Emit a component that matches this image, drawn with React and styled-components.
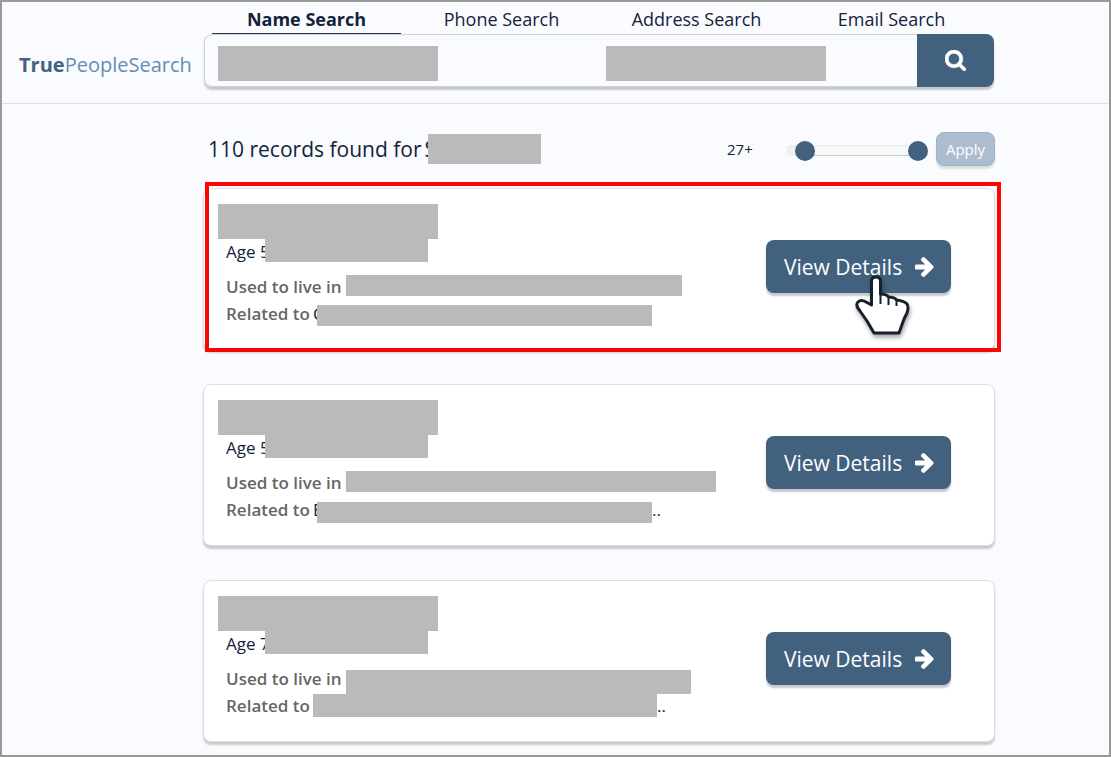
import React, { useState } from "react";
import styled, { createGlobalStyle, css } from "styled-components";

const navy = "#42617f";
const ink = "#13233a";

const GlobalStyle = createGlobalStyle`
  *, *::before, *::after { box-sizing: border-box; }
  body {
    margin: 0;
    background: #fafbff;
    color: ${ink};
    font-family: "Open Sans", "Noto Sans", sans-serif;
  }
  button, input { font: inherit; }
`;

const Page = styled.div`
  min-height: 100vh;
  border: 2px solid #999;
  padding-bottom: 11px;
`;

const columns = css`
  display: grid;
  grid-template-columns: 201px minmax(0, 792px);
`;

const Header = styled.header`
  ${columns}
  padding-bottom: 16px;
  border-bottom: 1px solid #dde0e5;
`;

const Logo = styled.a`
  align-self: end;
  padding: 0 0 8px 17px;
  color: #648db6;
  font-size: 20px;
  line-height: 28px;
  text-decoration: none;
  white-space: nowrap;

  strong { color: ${navy}; }
`;

const Tabs = styled.nav`
  display: grid;
  grid-template-columns: repeat(4, 1fr);
  padding: 0 6px;
`;

const Tab = styled.a`
  margin: 0 3px;
  height: 32px;
  border-bottom: 1px solid ${(p) => (p.$active ? "#2b3446" : "transparent")};
  color: ${ink};
  font-size: 18px;
  font-weight: ${(p) => (p.$active ? 700 : 400)};
  line-height: 34px;
  text-align: center;
  text-decoration: none;
  white-space: nowrap;
`;

const SearchBar = styled.form`
  display: grid;
  grid-template-columns: 388fr 325fr 77px;
  height: 53px;
  margin: 0 1px;
  border-radius: 8px;
  box-shadow: inset 0 0 0 1px #cdd3db, 0 3px 2px #c6c8cb;
`;

const Field = styled.label`
  position: relative;
  display: block;
`;

const FieldInput = styled.input`
  width: 100%;
  height: 100%;
  padding: 0 14px;
  border: 0;
  background: transparent;
`;

const FieldMask = styled.span`
  position: absolute;
  top: 12px;
  left: 14px;
  width: 220px;
  height: 35px;
  background: #bababa;
`;

const SearchButton = styled.button`
  display: grid;
  place-items: center;
  border: 0;
  border-radius: 0 8px 8px 0;
  background: ${navy};
  color: #fff;
`;

const Icon = styled.svg`
  flex: none;
  width: ${(p) => p.$width}px;
  height: ${(p) => p.$height}px;
  fill: currentColor;
`;

const Main = styled.main`
  ${columns}
`;

const Results = styled.section`
  grid-column: 2;
`;

const Toolbar = styled.div`
  display: flex;
  align-items: center;
  height: 84px;
  padding: 28px 0 22px;
`;

const Title = styled.h1`
  display: flex;
  align-items: center;
  flex: 1;
  margin: 0;
  padding-left: 5px;
  font-size: 21px;
  font-weight: 400;
  line-height: 30px;
  white-space: nowrap;
`;

const Lead = styled.span`
  display: flex;
  flex: none;
  gap: 3px;
  width: ${(p) => p.$width}px;
  white-space: nowrap;
`;

const Mask = styled.span`
  position: relative;
  flex: none;
  width: ${(p) => p.$width}px;
  height: ${(p) => p.$height}px;
  margin-top: ${(p) => p.$drop || 0}px;
  background: #bababa;
`;

const AgeValue = styled.output`
  width: 60px;
  font-size: 15px;
`;

const Slider = styled.div`
  position: relative;
  width: 141px;
  height: 20px;
  margin: 3px 8px 0 0;

  &::before {
    content: "";
    position: absolute;
    inset: 4px 8px 5px 0;
    border-radius: 4px;
    background: linear-gradient(to right, #f0f1f3 8px, #f7f8f8 24px);
    box-shadow: inset 1px 1px 1px #ebecef;
  }

  &::after {
    content: "";
    position: absolute;
    inset: 14px 16px 5px 20px;
    background: #cacccc;
  }
`;

const Range = styled.input`
  position: absolute;
  z-index: 1;
  inset: 0;
  width: 100%;
  height: 20px;
  margin: 0;
  appearance: none;
  background: transparent;
  pointer-events: none;

  &::-webkit-slider-thumb {
    appearance: none;
    width: 20px;
    height: 20px;
    border-radius: 50%;
    background: ${navy};
    pointer-events: auto;
  }
`;

const ApplyButton = styled.button`
  width: 59px;
  height: 34px;
  padding: 0;
  border: 1px solid #9fb3c8;
  border-radius: 8px;
  background: #acbdcf;
  color: #fff;
  font-size: 15px;
  box-shadow: 0 3px 2px #dddfe1;
`;

const CardList = styled.div`
  display: grid;
  gap: 34px;
`;

const Card = styled.article`
  position: relative;
  display: flex;
  align-items: flex-start;
  justify-content: space-between;
  height: 162px;
  padding: 15px 43px 0 14px;
  border: 1px solid #dcdee0;
  border-radius: 8px;
  background: #fff;
  box-shadow: 0 3px 2px #c9cacb;
`;

const Highlight = styled.div`
  position: absolute;
  inset: -7px -7px -3px 1px;
  border: 4px solid #fb0505;
  pointer-events: none;
`;

const Details = styled.div`
  display: flex;
  flex-direction: column;
`;

const Row = styled.div`
  display: flex;
  height: 27px;
  padding-left: 8px;
  margin-bottom: ${(p) => (p.$spaced ? 8 : 0)}px;
  font-size: 17px;
  line-height: 25px;

  b {
    color: #666;
    font-weight: 600;
  }
`;

const ViewButton = styled.button`
  display: flex;
  align-items: center;
  justify-content: space-between;
  width: 185px;
  height: 53px;
  margin-top: 36px;
  padding: 0 17px 0 18px;
  border: 0;
  border-radius: 8px;
  background: ${navy};
  color: #fff;
  font-size: 21px;
  white-space: nowrap;
  box-shadow: 0 3px 2px #c6c8cb;
`;

const Pointer = styled.svg`
  position: absolute;
  top: 86px;
  right: 79px;
  width: 64px;
  height: 68px;
  filter: drop-shadow(1px 3px 2px rgba(0, 0, 0, 0.35));
`;

const people = [
  { age: "5", place: "L", relative: "C", placeMask: [336, 21, 1], relativeMask: [91, 335, 21, 4], highlighted: true },
  { age: "5", place: "L", relative: "E", placeMask: [370, 21, 1], relativeMask: [91, 335, 21, 5], more: ".." },
  { age: "7", place: "L", relative: "", placeMask: [345, 24, 4], relativeMask: [87, 344, 23, 1], more: ".." },
];

function SearchIcon() {
  return (
    <Icon $width={21} $height={21} viewBox="0 128 1664 1664" aria-hidden="true">
      <path
        d="M1152 832q0-185-131.5-316.5t-316.5-131.5-316.5 131.5-131.5 316.5 131.5 316.5 316.5 131.5 316.5-131.5 131.5-316.5zM1664 1664q0 52-38 90t-90 38q-54 0-90-38l-343-342q-179 124-399 124-143 0-273.500-55.500t-225-150-150-225-55.500-273.500 55.500-273.500 150-225 225-150 273.500-55.500 273.500 55.500 225 150 150 225 55.500 273.500q0 220-124 399l343 343q37 37 37 90z"
        stroke="currentColor"
        strokeWidth="50"
      />
    </Icon>
  );
}

function ArrowIcon() {
  return (
    <Icon $width={19} $height={20} viewBox="64 180 1408 1560" aria-hidden="true">
      <path d="M1472 960q0 54-37 91l-651 651q-39 37-91 37-51 0-90-37l-75-75q-38-38-38-91t38-91l293-293h-704q-52 0-84.500-37.500t-32.500-90.500v-128q0-53 32.500-90.500t84.500-37.500h704l-293-294q-38-36-38-90t38-90l75-75q38-38 90-38 53 0 91 38l651 651q37 35 37 90z" />
    </Icon>
  );
}

function ResultCard({ person }) {
  const [placeWidth, placeHeight, placeDrop] = person.placeMask;
  const [leadWidth, relWidth, relHeight, relDrop] = person.relativeMask;
  return (
    <Card>
      <Details>
        <Mask $width={220} $height={35} />
        <Row $spaced>
          <Lead $width={39}>Age {person.age}</Lead>
          <Mask $width={163} $height={23} />
        </Row>
        <Row>
          <Lead $width={120}><b>Used to live in</b><span>{person.place}</span></Lead>
          <Mask $width={placeWidth} $height={placeHeight} $drop={placeDrop} />
        </Row>
        <Row>
          <Lead $width={leadWidth}><b>Related to</b><span>{person.relative}</span></Lead>
          <Mask $width={relWidth} $height={relHeight} $drop={relDrop} />
          {person.more}
        </Row>
      </Details>
      <ViewButton type="button">
        View Details <ArrowIcon />
      </ViewButton>
      {person.highlighted && (
        <>
          <Highlight />
          <Pointer viewBox="0 0 64 68" aria-hidden="true">
            <path
              d="M20.500 30V6q0-4 4.500-4t4.500 4v13q6 0 8 3 6 0 8 3 8 1 10.500 4 2 3 0 9L53 44 48 58H23L16 46 9 36Q4 30 7 27q3-3 8 0z"
              fill="#fff"
              stroke="#18202b"
              strokeWidth="3"
              strokeLinejoin="round"
            />
            <path d="M29.500 18v11M37.500 21v9M45.500 24v7" fill="none" stroke="#18202b" strokeWidth="2" />
          </Pointer>
        </>
      )}
    </Card>
  );
}

export default function App() {
  const [low, setLow] = useState(27);
  const [high, setHigh] = useState(120);
  return (
    <>
      <GlobalStyle />
      <Page>
        <Header>
          <Logo href="#"><strong>True</strong>PeopleSearch</Logo>
          <div>
            <Tabs>
              <Tab href="#name" $active>Name Search</Tab>
              <Tab href="#phone">Phone Search</Tab>
              <Tab href="#address">Address Search</Tab>
              <Tab href="#email">Email Search</Tab>
            </Tabs>
            <SearchBar onSubmit={(e) => e.preventDefault()}>
              <Field>
                <FieldInput aria-label="Name" />
                <FieldMask />
              </Field>
              <Field>
                <FieldInput aria-label="City and state" />
                <FieldMask />
              </Field>
              <SearchButton aria-label="Search"><SearchIcon /></SearchButton>
            </SearchBar>
          </div>
        </Header>
        <Main>
          <Results>
            <Toolbar>
              <Title>
                <Lead $width={220}><span>110 records found for</span><span>S</span></Lead>
                <Mask $width={113} $height={30} />
              </Title>
              <AgeValue>{low}+</AgeValue>
              <Slider>
                <Range type="range" aria-label="Minimum age" min="20" max="120" value={low} onChange={(e) => setLow(+e.target.value)} />
                <Range type="range" aria-label="Maximum age" min="20" max="120" value={high} onChange={(e) => setHigh(+e.target.value)} />
              </Slider>
              <ApplyButton type="button">Apply</ApplyButton>
            </Toolbar>
            <CardList>
              {people.map((person, i) => <ResultCard key={i} person={person} />)}
            </CardList>
          </Results>
        </Main>
      </Page>
    </>
  );
}
